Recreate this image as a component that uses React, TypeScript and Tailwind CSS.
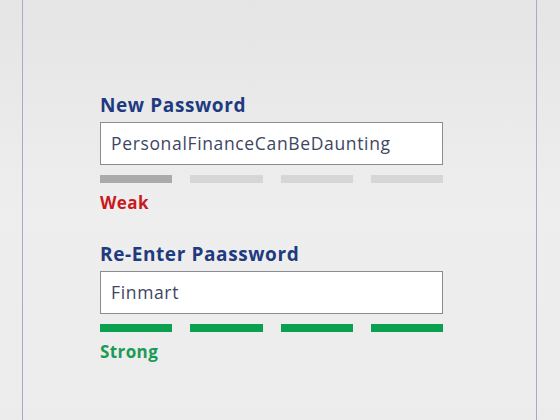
import React from "react";

type Strength = {
  label: string;
  textClass: string;
  bars: string[];
};

function PasswordField({
  title,
  value,
  strength,
}: {
  title: string;
  value: string;
  strength: Strength;
}) {
  return (
    <div className="flex flex-col">
      <div className="h-[24px] text-[19px] leading-[24px] font-bold tracking-[0.6px] text-[#1e3a80]">
        {title}
      </div>
      <div className="mt-[5px] flex h-[43px] w-[343px] items-center border border-[#8a8c92] bg-white pl-[10px] text-[17.5px] tracking-[0.65px] text-[#3d4662]">
        {value}
      </div>
      <div className="mt-[10px] flex w-[343px] gap-[18px]">
        {strength.bars.map((c, i) => (
          <div key={i} className={`h-[8px] flex-1 ${c}`} />
        ))}
      </div>
      <div className={`mt-[9px] h-[22px] text-[17px] leading-[22px] font-bold tracking-[0.4px] ${strength.textClass}`}>
        {strength.label}
      </div>
    </div>
  );
}

export default function App() {
  const weak: Strength = {
    label: "Weak",
    textClass: "text-[#c8191e]",
    bars: ["bg-[#aaaaaa]", "bg-[#d6d6d6]", "bg-[#d6d6d6]", "bg-[#d6d6d6]"],
  };
  const strong: Strength = {
    label: "Strong",
    textClass: "text-[#1b9a57]",
    bars: ["bg-[#0aa050]", "bg-[#0aa050]", "bg-[#0aa050]", "bg-[#0aa050]"],
  };

  return (
    <div
      className="h-[420px] w-[560px] overflow-hidden bg-gradient-to-b from-[#e5e5e5] via-[#eeeeee] to-[#ececec]"
      style={{ fontFamily: '"Open Sans", "Noto Sans", sans-serif' }}
    >
      <div className="ml-[22px] flex h-full w-[515px] flex-col gap-[28px] border-x border-[#a9abc6] pl-[77px] pt-[93px]">
        <PasswordField
          title="New Password"
          value="PersonalFinanceCanBeDaunting"
          strength={weak}
        />
        <PasswordField title="Re-Enter Paassword" value="Finmart" strength={strong} />
      </div>
    </div>
  );
}
